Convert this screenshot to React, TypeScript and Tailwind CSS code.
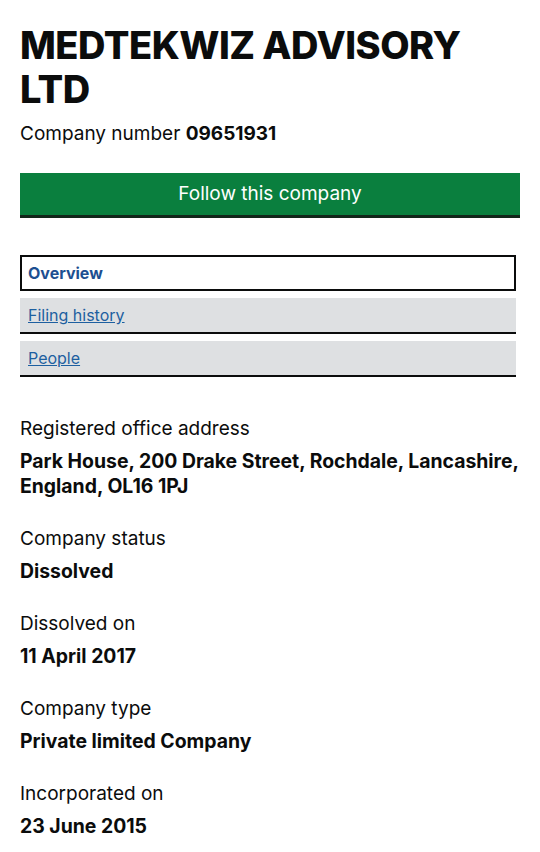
import React from "react";

const font = { fontFamily: "Inter, 'Noto Sans', sans-serif" };

function Field({ label, value }: { label: string; value: React.ReactNode }) {
  return (
    <div className="mb-[27px]">
      <div className="text-[19px] leading-[25px] text-[#0b0c0c]">{label}</div>
      <div className="mt-[8px] text-[19.4px] leading-[25px] font-bold text-[#0b0c0c]">{value}</div>
    </div>
  );
}

export default function App() {
  return (
    <div className="w-[540px] min-h-[852px] bg-white px-[20px] pt-[23px]" style={font}>
      <h1 className="text-[38px] leading-[44px] font-extrabold text-[#0b0c0c] tracking-[-0.5px]">
        MEDTEKWIZ ADVISORY LTD
      </h1>
      <p className="mt-[10px] text-[19px] leading-[25px] text-[#0b0c0c]">
        Company number <span className="font-bold">09651931</span>
      </p>
      <button className="mt-[27px] w-[500px] h-[42px] bg-[#0a7f3e] text-white text-[19px] shadow-[0_3px_0_#12261a] flex items-center justify-center">
        Follow this company
      </button>
      <nav className="mt-[40px] w-[496px] flex flex-col gap-[7px]">
        <div className="h-[36px] border-2 border-[#0b0c0c] bg-white flex items-center px-[6px]">
          <span className="text-[16px] font-bold text-[#1d4f91]">Overview</span>
        </div>
        <div className="h-[36px] bg-[#dee0e2] border-b-2 border-[#0b0c0c] flex items-center px-[8px]">
          <a className="text-[16px] text-[#1d5fa0] underline">Filing history</a>
        </div>
        <div className="h-[36px] bg-[#dee0e2] border-b-2 border-[#0b0c0c] flex items-center px-[8px]">
          <a className="text-[16px] text-[#1d5fa0] underline">People</a>
        </div>
      </nav>
      <div className="mt-[39px]">
        <Field
          label="Registered office address"
          value={<>Park House, 200 Drake Street, Rochdale, Lancashire, England, OL16 1PJ</>}
        />
        <Field label="Company status" value="Dissolved" />
        <Field label="Dissolved on" value="11 April 2017" />
        <Field label="Company type" value="Private limited Company" />
        <Field label="Incorporated on" value="23 June 2015" />
      </div>
    </div>
  );
}
